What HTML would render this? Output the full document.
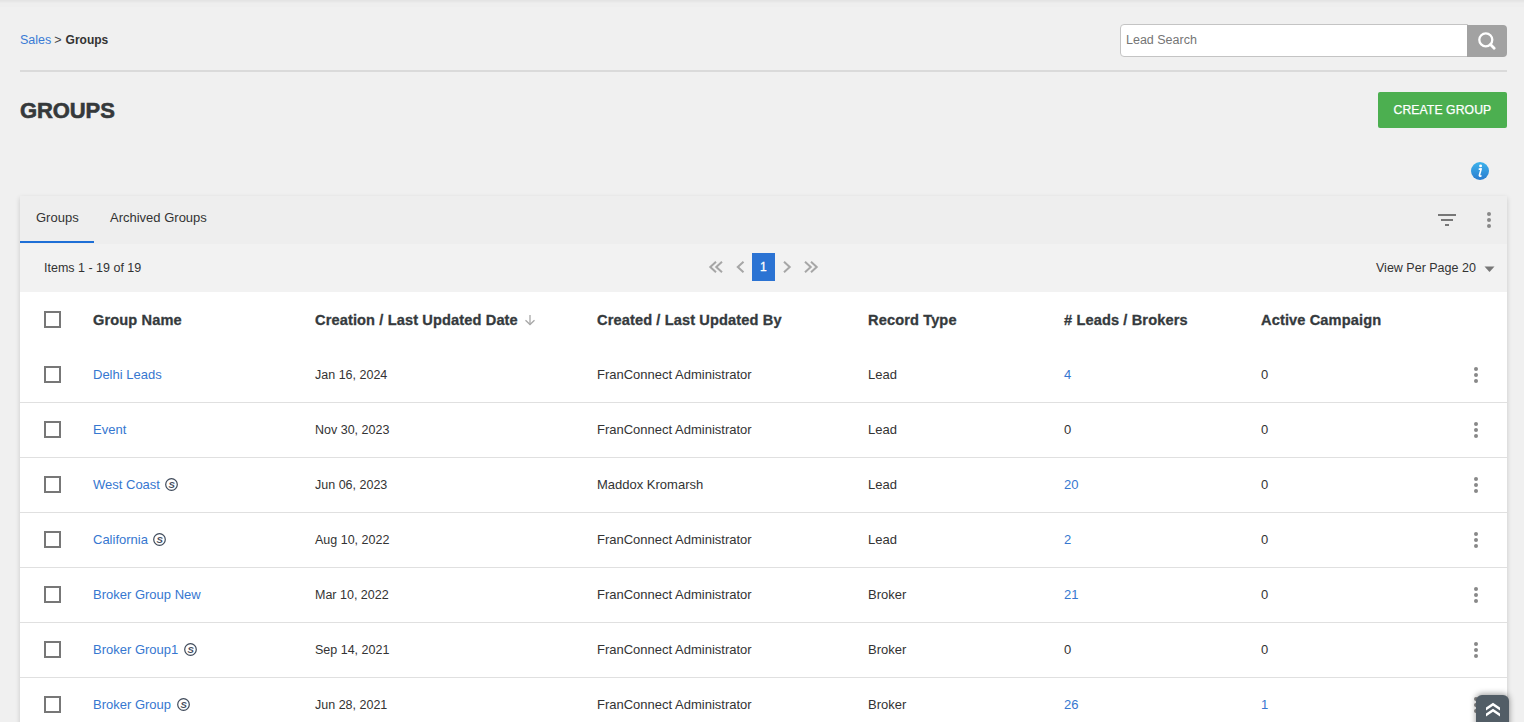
<!DOCTYPE html>
<html>
<head>
<meta charset="utf-8">
<style>
html,body{margin:0;padding:0;}
body{width:1524px;height:722px;overflow:hidden;background:#f0f0f0;position:relative;font-family:"Liberation Sans",sans-serif;color:#333;}
.t{position:absolute;white-space:nowrap;line-height:1;}
.topshadow{position:absolute;left:0;top:0;width:1524px;height:7px;background:linear-gradient(#e4e4e4 0px,#e4e4e4 1px,#e7e7e7 1px,#e7e7e7 2px,#ebebeb 2px,#ebebeb 3px,#eeeeee 3px,#eeeeee 7px);}
.hr{position:absolute;left:20px;top:70px;width:1487px;height:2px;background:#dadada;}
.search{position:absolute;left:1120px;top:24px;width:346px;height:31px;background:#fff;border:1px solid #c4c4c4;border-radius:4px 0 0 4px;}
.sbtn{position:absolute;left:1467px;top:25px;width:40px;height:32px;background:#a2a2a2;border-radius:0 4px 4px 0;}
.create{position:absolute;left:1378px;top:92px;width:129px;height:36px;background:#4caf50;border-radius:2px;}
.info{position:absolute;left:1471px;top:162px;width:18px;height:18px;border-radius:50%;background:linear-gradient(#3db3ec,#2a7ccf);}
.card{position:absolute;left:20px;top:196px;width:1487px;height:600px;background:#fff;box-shadow:0 2px 5px rgba(0,0,0,0.17);}
.tabbar{position:absolute;left:0;top:0;width:1487px;height:48px;background:#eeeeee;}
.tabline{position:absolute;left:0;top:45px;width:74px;height:2px;background:#1e6fd6;}
.toolbar{position:absolute;left:0;top:48px;width:1487px;height:48px;background:#f2f2f2;}
.pg1{position:absolute;left:732px;top:9px;width:23px;height:28px;background:#2b73d3;}
.cb{position:absolute;width:13px;height:13px;border:2px solid #777;}
.row-line{position:absolute;left:20px;width:1487px;height:1px;background:#e0e0e0;}
.h{font-weight:700;font-size:14.6px;color:#353a3d;letter-spacing:0.12px;-webkit-text-stroke:0.3px #353a3d;}
.c{font-size:13px;color:#333;}
.lnk{color:#3677d0;}
.sb{display:inline-block;vertical-align:top;margin-left:5.5px;width:13px;height:13px;}
.kb{position:absolute;width:4px;height:16px;}
.kb i{position:absolute;left:0;width:4px;height:4px;border-radius:50%;background:#888;}
.scrolltop{position:absolute;left:1476px;top:695px;width:33px;height:40px;background:#525d66;border-radius:6px;box-shadow:0 -1px 6px rgba(0,0,0,0.4);}
</style>
</head>
<body>
<div class="topshadow"></div>

<!-- breadcrumb -->
<div class="t" style="left:20px;top:33.5px;font-size:12.5px;"><span style="color:#3a7bd5">Sales</span><span style="color:#444;margin-left:3px">&gt;</span><b style="font-size:12px;margin-left:4px">Groups</b></div>

<!-- search -->
<div class="search"></div>
<div class="t" style="left:1126px;top:34px;font-size:12.5px;color:#757575;">Lead Search</div>
<div class="sbtn">
  <svg width="40" height="32" viewBox="0 0 40 32" style="position:absolute;left:0;top:0">
    <circle cx="18.8" cy="14.8" r="6.5" fill="none" stroke="#fff" stroke-width="2.3"/>
    <line x1="23.5" y1="19.5" x2="27.2" y2="23.3" stroke="#fff" stroke-width="2.8" stroke-linecap="round"/>
  </svg>
</div>
<div class="hr"></div>

<!-- title -->
<div class="t" style="left:20px;top:99.5px;font-size:22px;font-weight:700;color:#35393b;-webkit-text-stroke:0.6px #35393b;letter-spacing:-0.1px">GROUPS</div>
<div class="create"><div class="t" style="left:15.5px;top:12px;font-size:12.2px;color:#fff;-webkit-text-stroke:0.25px #fff;letter-spacing:0.1px">CREATE GROUP</div></div>
<div class="info"><svg width="18" height="18" style="position:absolute;left:0;top:0"><circle cx="9.6" cy="3.9" r="1.45" fill="#fff"/><path d="M8.3 7.1 L10.2 6.9 L8.4 13.2 Q8.1 14.5 9.9 13.9" fill="none" stroke="#fff" stroke-width="1.6" stroke-linecap="round" stroke-linejoin="round"/></svg></div>

<!-- card -->
<div class="card">
  <div class="tabbar">
    <div class="t" style="left:16px;top:15px;font-size:13px;color:#333;">Groups</div>
    <div class="t" style="left:90px;top:15px;font-size:13px;color:#333;">Archived Groups</div>
    <div class="tabline"></div>
    <svg width="20" height="14" style="position:absolute;left:1417px;top:17px">
      <rect x="1" y="1" width="18" height="2" fill="#777"/>
      <rect x="4" y="6" width="12" height="2" fill="#777"/>
      <rect x="8" y="11" width="4" height="2" fill="#777"/>
    </svg>
    <div class="kb" style="left:1467px;top:16px"><i style="top:0"></i><i style="top:6px"></i><i style="top:12px"></i></div>
  </div>
  <div class="toolbar">
    <div class="t" style="left:24px;top:18px;font-size:12.5px;color:#333;">Items 1 - 19 of 19</div>
        <div class="pg1"><div class="t" style="left:8px;top:8px;font-size:12px;color:#fff;-webkit-text-stroke:0.3px #fff">1</div></div>
    <div class="t" style="left:1356px;top:18px;font-size:12.5px;color:#333;">View Per Page<span style="margin-left:3.5px">20</span></div>
    <svg width="12" height="7" style="position:absolute;left:1464px;top:21.5px"><path d="M0.5 0.5 L10.5 0.5 L5.5 6 Z" fill="#777"/></svg>
  </div>
</div>
<div class="cb" style="left:44px;top:311px"></div>
<div class="t h" style="left:93px;top:313px">Group Name</div>
<div class="t h" style="left:315px;top:313px">Creation / Last Updated Date</div>
<svg width="12" height="12" style="position:absolute;left:524px;top:314px"><g fill="none" stroke="#a8a8a8" stroke-width="1.3"><line x1="6" y1="1" x2="6" y2="10.5"/><polyline points="1.5,6.2 6,10.5 10.5,6.2"/></g></svg>
<div class="t h" style="left:597px;top:313px">Created / Last Updated By</div>
<div class="t h" style="left:868px;top:313px">Record Type</div>
<div class="t h" style="left:1064px;top:313px"># Leads / Brokers</div>
<div class="t h" style="left:1261px;top:313px">Active Campaign</div>
<div class="cb" style="left:44px;top:366px"></div>
<div class="t c" style="left:93px;top:368px"><span class="lnk">Delhi Leads</span></div>
<div class="t c"  style="font-size:12.5px;left:315px;top:369px">Jan 16, 2024</div>
<div class="t c" style="left:597px;top:368px">FranConnect Administrator</div>
<div class="t c" style="left:868px;top:368px">Lead</div>
<div class="t c lnk" style="left:1064px;top:368px">4</div>
<div class="t c" style="left:1261px;top:368px">0</div>
<div class="kb" style="left:1474px;top:367px"><i style="top:0"></i><i style="top:6px"></i><i style="top:12px"></i></div>
<div class="row-line" style="top:402px"></div>
<div class="cb" style="left:44px;top:421px"></div>
<div class="t c" style="left:93px;top:423px"><span class="lnk">Event</span></div>
<div class="t c"  style="font-size:12.5px;left:315px;top:424px">Nov 30, 2023</div>
<div class="t c" style="left:597px;top:423px">FranConnect Administrator</div>
<div class="t c" style="left:868px;top:423px">Lead</div>
<div class="t c" style="left:1064px;top:423px">0</div>
<div class="t c" style="left:1261px;top:423px">0</div>
<div class="kb" style="left:1474px;top:422px"><i style="top:0"></i><i style="top:6px"></i><i style="top:12px"></i></div>
<div class="row-line" style="top:457px"></div>
<div class="cb" style="left:44px;top:476px"></div>
<div class="t c" style="left:93px;top:478px"><span class="lnk">West Coast</span><svg class="sb" width="13" height="13" viewBox="0 0 13 13"><circle cx="6.5" cy="6.5" r="5.8" fill="none" stroke="#3f4a5a" stroke-width="1.2"/><text x="6.6" y="9.8" text-anchor="middle" font-family="Liberation Sans" font-weight="700" font-style="italic" font-size="9.5" fill="#3f4a5a">S</text></svg></div>
<div class="t c"  style="font-size:12.5px;left:315px;top:479px">Jun 06, 2023</div>
<div class="t c" style="left:597px;top:478px">Maddox Kromarsh</div>
<div class="t c" style="left:868px;top:478px">Lead</div>
<div class="t c lnk" style="left:1064px;top:478px">20</div>
<div class="t c" style="left:1261px;top:478px">0</div>
<div class="kb" style="left:1474px;top:477px"><i style="top:0"></i><i style="top:6px"></i><i style="top:12px"></i></div>
<div class="row-line" style="top:512px"></div>
<div class="cb" style="left:44px;top:531px"></div>
<div class="t c" style="left:93px;top:533px"><span class="lnk">California</span><svg class="sb" width="13" height="13" viewBox="0 0 13 13"><circle cx="6.5" cy="6.5" r="5.8" fill="none" stroke="#3f4a5a" stroke-width="1.2"/><text x="6.6" y="9.8" text-anchor="middle" font-family="Liberation Sans" font-weight="700" font-style="italic" font-size="9.5" fill="#3f4a5a">S</text></svg></div>
<div class="t c"  style="font-size:12.5px;left:315px;top:534px">Aug 10, 2022</div>
<div class="t c" style="left:597px;top:533px">FranConnect Administrator</div>
<div class="t c" style="left:868px;top:533px">Lead</div>
<div class="t c lnk" style="left:1064px;top:533px">2</div>
<div class="t c" style="left:1261px;top:533px">0</div>
<div class="kb" style="left:1474px;top:532px"><i style="top:0"></i><i style="top:6px"></i><i style="top:12px"></i></div>
<div class="row-line" style="top:567px"></div>
<div class="cb" style="left:44px;top:586px"></div>
<div class="t c" style="left:93px;top:588px"><span class="lnk">Broker Group New</span></div>
<div class="t c"  style="font-size:12.5px;left:315px;top:589px">Mar 10, 2022</div>
<div class="t c" style="left:597px;top:588px">FranConnect Administrator</div>
<div class="t c" style="left:868px;top:588px">Broker</div>
<div class="t c lnk" style="left:1064px;top:588px">21</div>
<div class="t c" style="left:1261px;top:588px">0</div>
<div class="kb" style="left:1474px;top:587px"><i style="top:0"></i><i style="top:6px"></i><i style="top:12px"></i></div>
<div class="row-line" style="top:622px"></div>
<div class="cb" style="left:44px;top:641px"></div>
<div class="t c" style="left:93px;top:643px"><span class="lnk">Broker Group1</span><svg class="sb" width="13" height="13" viewBox="0 0 13 13"><circle cx="6.5" cy="6.5" r="5.8" fill="none" stroke="#3f4a5a" stroke-width="1.2"/><text x="6.6" y="9.8" text-anchor="middle" font-family="Liberation Sans" font-weight="700" font-style="italic" font-size="9.5" fill="#3f4a5a">S</text></svg></div>
<div class="t c"  style="font-size:12.5px;left:315px;top:644px">Sep 14, 2021</div>
<div class="t c" style="left:597px;top:643px">FranConnect Administrator</div>
<div class="t c" style="left:868px;top:643px">Broker</div>
<div class="t c" style="left:1064px;top:643px">0</div>
<div class="t c" style="left:1261px;top:643px">0</div>
<div class="kb" style="left:1474px;top:642px"><i style="top:0"></i><i style="top:6px"></i><i style="top:12px"></i></div>
<div class="row-line" style="top:677px"></div>
<div class="cb" style="left:44px;top:696px"></div>
<div class="t c" style="left:93px;top:698px"><span class="lnk">Broker Group</span><svg class="sb" width="13" height="13" viewBox="0 0 13 13"><circle cx="6.5" cy="6.5" r="5.8" fill="none" stroke="#3f4a5a" stroke-width="1.2"/><text x="6.6" y="9.8" text-anchor="middle" font-family="Liberation Sans" font-weight="700" font-style="italic" font-size="9.5" fill="#3f4a5a">S</text></svg></div>
<div class="t c"  style="font-size:12.5px;left:315px;top:699px">Jun 28, 2021</div>
<div class="t c" style="left:597px;top:698px">FranConnect Administrator</div>
<div class="t c" style="left:868px;top:698px">Broker</div>
<div class="t c lnk" style="left:1064px;top:698px">26</div>
<div class="t c lnk" style="left:1261px;top:698px">1</div>
<div class="kb" style="left:1474px;top:697px"><i style="top:0"></i><i style="top:6px"></i><i style="top:12px"></i></div>
<div class="row-line" style="top:732px"></div>

<svg width="1524" height="722" style="position:absolute;left:0;top:0;pointer-events:none">
  <g fill="none" stroke="#a6a6a6" stroke-width="2">
    <polyline points="716,261.8 710.3,267 716,272.2"/>
    <polyline points="722,261.8 716.3,267 722,272.2"/>
    <polyline points="743.5,261.8 737.8,267 743.5,272.2"/>
    <polyline points="784,261.8 789.7,267 784,272.2"/>
    <polyline points="805,261.8 810.7,267 805,272.2"/>
    <polyline points="811,261.8 816.7,267 811,272.2"/>
  </g>
</svg>
<div class="scrolltop"><svg width="33" height="27" style="position:absolute;left:0;top:0"><path d="M10 12.5 L17 7.8 L24 12.5 L24 15.5 L17 10.8 L10 15.5 Z M10 18.5 L17 13.8 L24 18.5 L24 21.5 L17 16.8 L10 21.5 Z" fill="#fff"/></svg></div>
</body>
</html>
